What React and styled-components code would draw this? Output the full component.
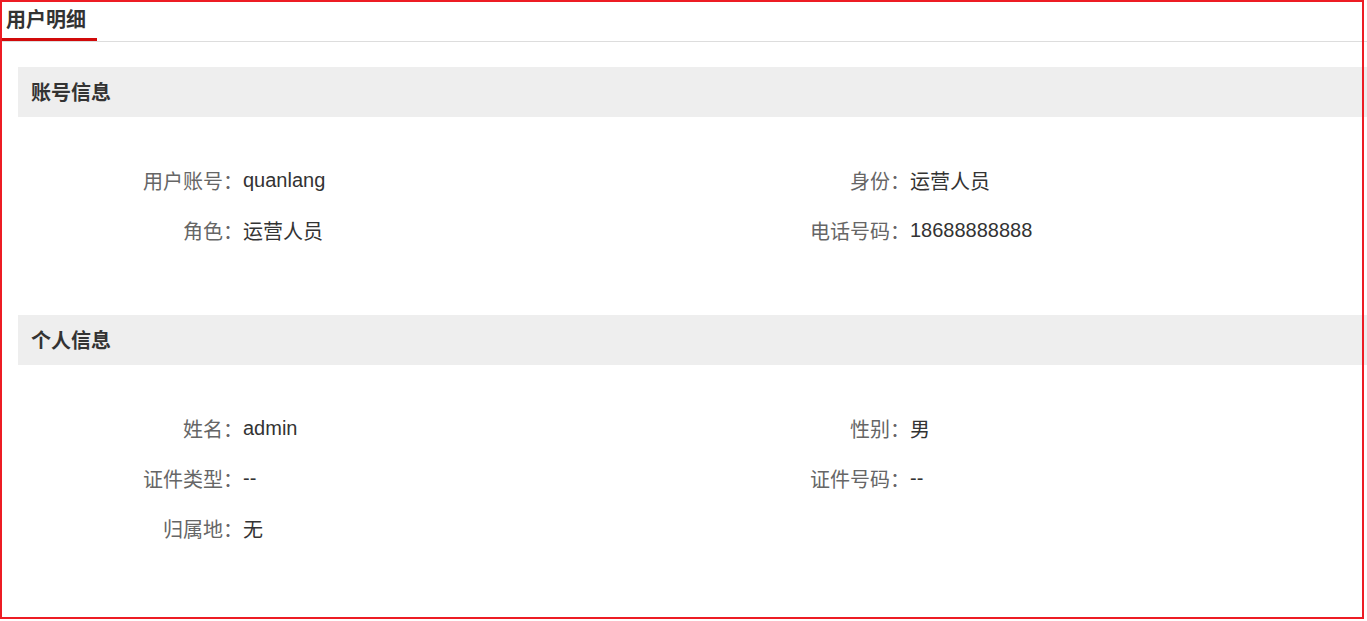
import styled, { createGlobalStyle } from 'styled-components';

const Global = createGlobalStyle`
  html, body {
    margin: 0;
    padding: 0;
    background: #fff;
  }
  body {
    font-family: "Noto Sans CJK SC", "Liberation Sans", sans-serif;
    color: #333;
  }
`;

const Page = styled.div`
  width: 1367px;
  height: 621px;
  position: relative;
  overflow: hidden;
  background: #fff;
`;

const Frame = styled.div`
  position: absolute;
  left: 0;
  top: 0;
  width: 1364px;
  height: 619px;
  box-sizing: border-box;
  border: 2px solid #ed1c24;
  pointer-events: none;
`;

const TabBar = styled.div`
  height: 41px;
  border-bottom: 1px solid #ddd;
  display: flex;
  align-items: flex-end;
`;

const Tab = styled.div`
  width: 97px;
  height: 39px;
  box-sizing: border-box;
  padding-left: 6px;
  border-bottom: 3px solid #d10a0a;
  font-size: 20px;
  font-weight: 700;
  line-height: 34px;
  color: #333;
`;

const Content = styled.div`
  padding: 25px 0 0 18px;
`;

const Section = styled.section`
  margin-bottom: 60px;
`;

const SectionHeader = styled.div`
  height: 50px;
  background: #eee;
  padding-left: 13px;
  font-size: 20px;
  font-weight: 700;
  line-height: 50px;
  color: #333;
`;

const Grid = styled.div`
  display: grid;
  grid-template-columns: 667px 1fr;
  padding-top: 38px;
`;

const Item = styled.div`
  display: flex;
  height: 50px;
  align-items: center;
  font-size: 20px;
`;

const Label = styled.span`
  width: 225px;
  text-align: right;
  color: #666;
`;

const Value = styled.span`
  color: #333;
  font-family: "Liberation Sans", "Noto Sans CJK SC", sans-serif;
`;

const account = [
  ['用户账号：', 'quanlang'],
  ['身份：', '运营人员'],
  ['角色：', '运营人员'],
  ['电话号码：', '18688888888'],
];

const personal = [
  ['姓名：', 'admin'],
  ['性别：', '男'],
  ['证件类型：', '--'],
  ['证件号码：', '--'],
  ['归属地：', '无'],
];

function InfoBlock({ title, items }) {
  return (
    <Section>
      <SectionHeader>{title}</SectionHeader>
      <Grid>
        {items.map(([label, value]) => (
          <Item key={label}>
            <Label>{label}</Label>
            <Value>{value}</Value>
          </Item>
        ))}
      </Grid>
    </Section>
  );
}

export default function App() {
  return (
    <Page>
      <Global />
      <TabBar>
        <Tab>用户明细</Tab>
      </TabBar>
      <Content>
        <InfoBlock title="账号信息" items={account} />
        <InfoBlock title="个人信息" items={personal} />
      </Content>
      <Frame />
    </Page>
  );
}
